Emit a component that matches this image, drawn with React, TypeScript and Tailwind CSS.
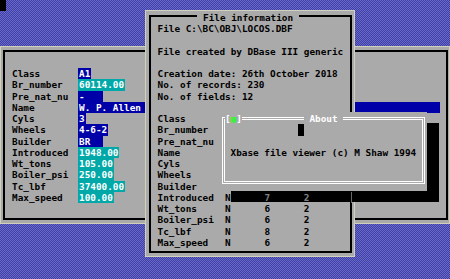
import React from "react";

const FONT = "font-['DejaVu_Sans_Mono',monospace] font-bold text-[9.35px] leading-[11.26px] whitespace-pre";

type Field = { label: string; value: string; w: string; bg: string };

const fields: Field[] = [
  { label: "Class", value: "A1", w: "w-[13.25px]", bg: "bg-[#0000a8]" },
  { label: "Br_number", value: "60114.00", w: "w-[47px]", bg: "bg-[#00a8a8]" },
  { label: "Pre_nat_nu", value: "-", w: "w-[24.5px]", bg: "bg-[#0000a8]" },
  { label: "Name", value: "W. P. Allen", w: "w-[362px]", bg: "bg-[#0000a8]" },
  { label: "Cyls", value: "3", w: "w-[7.625px]", bg: "bg-[#0000a8]" },
  { label: "Wheels", value: "4-6-2", w: "w-[30.125px]", bg: "bg-[#0000a8]" },
  { label: "Builder", value: "BR", w: "w-[24.5px]", bg: "bg-[#0000a8]" },
  { label: "Introduced", value: "1948.00", w: "w-[41.375px]", bg: "bg-[#00a8a8]" },
  { label: "Wt_tons", value: "105.00", w: "w-[35.75px]", bg: "bg-[#00a8a8]" },
  { label: "Boiler_psi", value: "250.00", w: "w-[35.75px]", bg: "bg-[#00a8a8]" },
  { label: "Tc_lbf", value: "37400.00", w: "w-[47px]", bg: "bg-[#00a8a8]" },
  { label: "Max_speed", value: "100.00", w: "w-[35.75px]", bg: "bg-[#00a8a8]" },
];

// Rows whose type/width columns lie under the About window show only their names.
const infoTable: [string, string, string, string][] = [
  ["Class", "", "", ""],
  ["Br_number", "", "", ""],
  ["Pre_nat_nu", "", "", ""],
  ["Name", "", "", ""],
  ["Cyls", "", "", ""],
  ["Wheels", "", "", ""],
  ["Builder", "", "", ""],
  ["Introduced", "N", "", ""],
  ["Wt_tons", "N", "6", "2"],
  ["Boiler_psi", "N", "6", "2"],
  ["Tc_lbf", "N", "8", "2"],
  ["Max_speed", "N", "6", "2"],
];

function MainWindow() {
  return (
    <div className="absolute left-[1px] top-[47px] w-[448px] h-[176px] bg-[#aaaaaa] outline outline-1 outline-[#d2d2bc] pl-[2px] pt-[3px] pr-[1px] pb-[3px]">
      <div className="h-full border-2 border-black pl-[7px] pt-[16.06px]">
        <div className="flex flex-col">
          {fields.map((f) => (
            <div key={f.label} className="flex h-[11.26px]">
              <div className="w-[66px] text-black">{f.label}</div>
              <div className={`${f.w} ${f.bg} h-[11.26px] pl-[1px] text-white overflow-hidden`}>{f.value}</div>
            </div>
          ))}
        </div>
      </div>
    </div>
  );
}

function FileInfoWindow() {
  return (
    <div className="absolute left-[146px] top-[11px] w-[208px] h-[245px] bg-[#aaaaaa] outline outline-1 outline-[#d2d2bc] pl-[3px] pt-[4px] pr-[2px] pb-[3px]">
      <div className="h-full border-2 border-black pl-[6.5px] pt-[6.02px] text-black">
        <div className="flex flex-col">
          <div className="h-[11.26px]">File C:\BC\OBJ\LOCOS.DBF</div>
          <div className="h-[11.26px]"></div>
          <div className="h-[11.26px]">File created by DBase III generic</div>
          <div className="h-[11.26px]"></div>
          <div className="h-[11.26px]">Creation date: 26th October 2018</div>
          <div className="h-[11.26px]">No. of records: 230</div>
          <div className="h-[11.26px]">No. of fields: 12</div>
          <div className="h-[11.26px]"></div>
          {infoTable.map((r) => (
            <div key={r[0]} className="flex h-[11.26px]">
              <div className="w-[67.5px]">{r[0]}</div>
              <div className="w-[39.375px]">{r[1]}</div>
              <div className="w-[39.375px]">{r[2]}</div>
              <div>{r[3]}</div>
            </div>
          ))}
        </div>
      </div>
      <div className="absolute left-[51.4px] top-[0.76px] h-[11.26px] bg-[#aaaaaa] text-black"> File information </div>
    </div>
  );
}

function AboutShadow() {
  return (
    <div className="absolute left-[231px] top-[123px] w-[208px] h-[79px] bg-black pt-[68.9px] pl-[33.4px] text-[#808080]">
      <div className="flex h-[11.26px]">
        <div className="w-[39.375px]">7</div>
        <div className="w-[47.5px]">2</div>
        <div className="w-[1px] h-[11.26px] bg-[#6a6a6a]"></div>
      </div>
    </div>
  );
}

function AboutWindow() {
  return (
    <div className="absolute left-[220px] top-[112px] w-[207px] h-[79px] bg-[#aaaaaa] pl-[2px] pt-[5px] pr-[2px] pb-[7px]">
      <div className="h-full border-[3px] border-double border-white pl-[5.6px] pt-[4.4px] text-black">
        <div className="flex flex-col">
          <div className="flex h-[11.26px]">
            <div className="w-[67.5px]"></div>
            <div className="w-[5.625px] h-[11.26px] bg-black"></div>
          </div>
          <div className="h-[11.26px]"></div>
          <div className="h-[11.26px]">Xbase file viewer (c) M Shaw 1994</div>
        </div>
      </div>
      <div className="absolute left-[5px] top-[1.1px] h-[11.26px] bg-[#aaaaaa] flex">
        <span className="text-white">[</span>
        <span className="text-[#40f040]">■</span>
        <span className="text-white">]</span>
      </div>
      <div className="absolute left-[83.75px] top-[1.1px] h-[11.26px] bg-[#aaaaaa] text-white"> About </div>
    </div>
  );
}

export default function App() {
  return (
    <div
      className={`relative w-[450px] h-[279px] overflow-hidden bg-[#5454b6] bg-[image:repeating-conic-gradient(#3e3ea6_0_25%,#6a6ac8_0_50%)] bg-[length:2px_2px] ${FONT}`}
    >
      <div className="absolute left-0 top-0 w-[6px] h-[11px] bg-black"></div>
      <MainWindow />
      <FileInfoWindow />
      <AboutShadow />
      <AboutWindow />
    </div>
  );
}
